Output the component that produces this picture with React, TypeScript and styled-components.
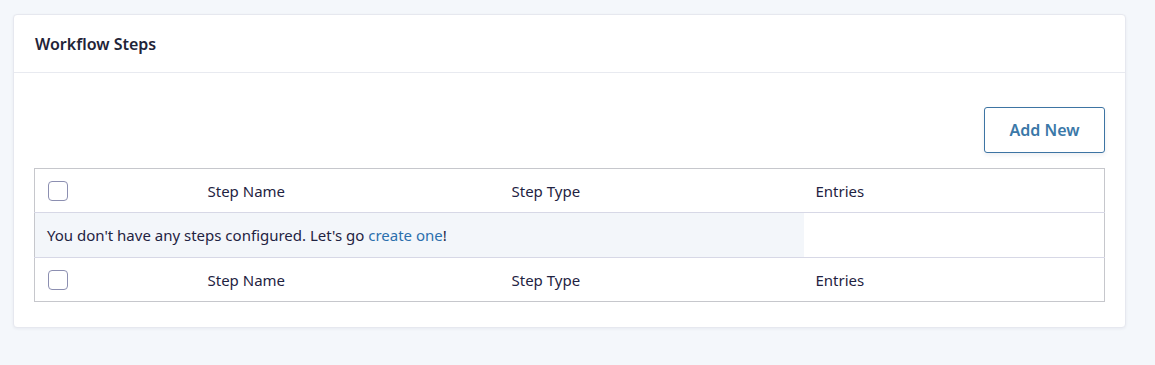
import React from 'react';
import styled, { createGlobalStyle } from 'styled-components';

const GlobalStyle = createGlobalStyle`
  html, body {
    margin: 0;
    padding: 0;
    background: #f4f7fb;
    font-family: "Noto Sans", "Open Sans", sans-serif;
    color: #1f2342;
  }
`;

const Page = styled.div`
  padding: 14px 29px 38px 13px;
`;

const Card = styled.section`
  background: #fff;
  border: 1px solid #e6e8ef;
  border-radius: 4px;
  box-shadow: 0 1px 3px rgba(30, 40, 80, 0.06);
`;

const CardHeader = styled.header`
  height: 57px;
  display: flex;
  align-items: center;
  padding: 0 21px;
  border-bottom: 1px solid #e8eaf0;
`;

const Title = styled.h2`
  margin: 0;
  font-size: 16px;
  font-weight: 600;
  color: #1f2438;
`;

const CardBody = styled.div`
  padding: 34px 20px 25px 20px;
`;

const Toolbar = styled.div`
  display: flex;
  justify-content: flex-end;
  margin-bottom: 15px;
`;

const Button = styled.button`
  height: 46px;
  width: 121px;
  border: 1px solid #3d74a3;
  border-radius: 3px;
  background: #fff;
  color: #3b78a8;
  font-family: inherit;
  font-size: 16px;
  font-weight: 600;
  box-shadow: 0 2px 4px rgba(30, 40, 80, 0.08);
  cursor: pointer;
`;

const Table = styled.table`
  width: 100%;
  border-collapse: collapse;
  border: 1px solid #c6c7cc;
  table-layout: fixed;
  font-size: 15px;

  tbody td {
    border-top: 1px solid #d7d8e6;
    border-bottom: 1px solid #d7d8e6;
  }
`;

const Row = styled.tr<{ $tall?: boolean }>`
  height: ${p => (p.$tall ? 45 : 44)}px;
`;

const Cell = styled.td<{ $shade?: boolean }>`
  padding: 0 12px;
  text-align: left;
  font-weight: 400;
  vertical-align: middle;
  background: ${p => (p.$shade ? '#f3f6fa' : '#fff')};
`;

const CheckCell = styled.th`
  padding: 0 0 0 13px;
  vertical-align: middle;
`;

const Check = styled.span`
  display: block;
  width: 18px;
  height: 18px;
  border: 1px solid #8c8fb1;
  border-radius: 4px;
  background: #fff;
`;

const Link = styled.a`
  color: #2b6fad;
  text-decoration: none;
`;

const columns = ['Step Name', 'Step Type', 'Entries'];
const widths = [161, 304, 304];

const HeadRow = () => (
  <Row>
    <CheckCell>
      <Check />
    </CheckCell>
    {columns.map(c => (
      <Cell as="th" key={c}>
        {c}
      </Cell>
    ))}
  </Row>
);

export default function App() {
  return (
    <>
      <GlobalStyle />
      <Page>
        <Card>
          <CardHeader>
            <Title>Workflow Steps</Title>
          </CardHeader>
          <CardBody>
            <Toolbar>
              <Button>Add New</Button>
            </Toolbar>
            <Table>
              <colgroup>
                {widths.map((w, i) => (
                  <col key={i} style={{ width: w }} />
                ))}
                <col />
              </colgroup>
              <thead>
                <HeadRow />
              </thead>
              <tbody>
                <Row $tall>
                  <Cell colSpan={3} $shade>
                    You don't have any steps configured. Let's go <Link href="#">create one</Link>!
                  </Cell>
                  <Cell />
                </Row>
              </tbody>
              <tfoot>
                <HeadRow />
              </tfoot>
            </Table>
          </CardBody>
        </Card>
      </Page>
    </>
  );
}
